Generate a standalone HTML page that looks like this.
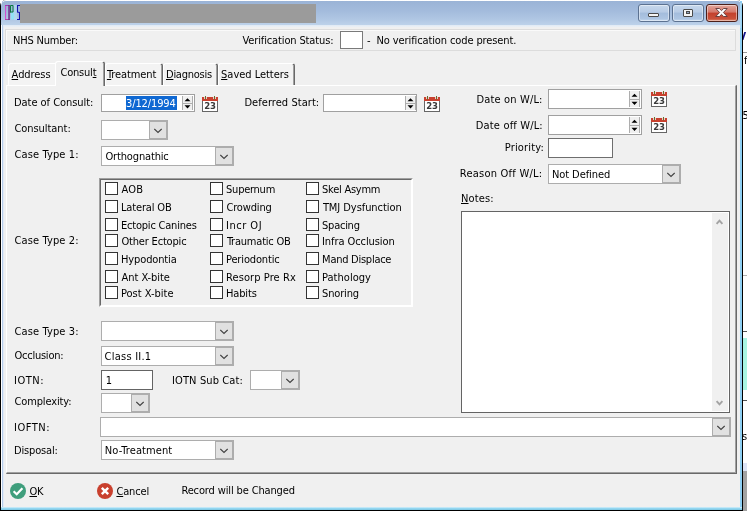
<!DOCTYPE html>
<html><head><meta charset="utf-8"><title>Consult</title>
<style>
html,body{margin:0;padding:0;background:#fff;}
#s{position:relative;width:747px;height:511px;overflow:hidden;background:transparent;will-change:transform;font-family:'DejaVu Sans Condensed','DejaVu Sans','Liberation Sans',sans-serif;font-stretch:condensed;font-size:11px;line-height:13px;}
#s div,#s svg,#s span{position:absolute;display:block;}
#s .t{white-space:nowrap;height:13px;}
#s .t u{position:static;display:inline;text-decoration:underline;text-underline-offset:1px;text-decoration-thickness:1px;}
#s .t b{position:static;display:inline;font-weight:normal;}
</style></head><body><div id="s">

<div style="left:743px;top:0px;width:4px;height:511px;background:#fff"></div>
<div style="left:743px;top:52px;width:4px;height:1px;background:#9a9a9a"></div>
<div style="left:743px;top:275px;width:4px;height:1px;background:#b0b0b0"></div>
<div style="left:743px;top:331px;width:4px;height:1px;background:#555"></div>
<div style="left:743px;top:338px;width:4px;height:52px;background:#a9f5e2"></div>
<div style="left:743px;top:400px;width:4px;height:1px;background:#555"></div>
<div style="left:743px;top:463px;width:4px;height:8px;background:#dde3f5"></div>
<div style="left:743px;top:471px;width:4px;height:40px;background:#a3a3a3"></div>
<span class="t" style="left:738.5px;top:30px;color:#14148c;font-size:11px;font-weight:bold">V</span>
<span class="t" style="left:744px;top:54px;color:#000">f</span>
<span class="t" style="left:742.5px;top:109px;color:#000">5</span>
<span class="t" style="left:742px;top:430px;color:#000">s</span>
<div style="left:0px;top:0px;width:743px;height:511px;background:#000;border-radius:6px 6px 0 0"></div>
<div style="left:1px;top:0px;width:741px;height:510px;background:linear-gradient(#fff,#dfeaf6 30px,#cfe6f6 200px,#9bd8f1);border-radius:5px 5px 0 0"></div>
<div style="left:1px;top:1px;width:2px;height:506px;background:linear-gradient(90deg,#fff 50%,#b4cbe9 50%)"></div>
<div style="left:740px;top:1px;width:2px;height:509px;background:#8ecff3"></div>
<div style="left:1px;top:507px;width:741px;height:3px;background:linear-gradient(#d9f0fa,#93d6f0 50%,#7cc6e2)"></div>
<div style="left:1px;top:1px;width:741px;height:24px;background:linear-gradient(#9ab3d6,#a3bbdc 40%,#afc6e3 75%,#bdd2ea);border-radius:5px 5px 0 0"></div>
<div style="left:3px;top:25px;width:737px;height:2px;background:linear-gradient(#dfe9f5,#ebf0f6)"></div>
<div style="left:740px;top:3px;width:2px;height:25px;background:linear-gradient(90deg,#b5dcf5,#8ecff3)"></div>
<div style="left:3px;top:27px;width:737px;height:480px;background:#f0f0f0"></div>
<div style="left:3px;top:25px;width:1px;height:482px;background:#e2eaf6"></div>
<svg style="left:4px;top:4px" width="17" height="17" viewBox="0 0 17 17">
<rect x="7" y="8.5" width="3" height="7" fill="#93e2f6"/><rect x="10" y="1" width="3" height="15" fill="#b5e0f4" opacity="0.7"/>
<rect x="1" y="1" width="1.1" height="15" fill="#d24fd0"/><rect x="1" y="1" width="4.6" height="1" fill="#a53ab0"/><rect x="1" y="15" width="4.6" height="1" fill="#b040a8"/>
<rect x="4.3" y="1" width="1.5" height="15" fill="#6e2a86"/>
<path d="M6.5 8.6 V1.5 H9 V8 H6.5" fill="none" stroke="#0b7a40" stroke-width="1"/>
<path d="M16 1.5 H13.5 V8 L15.5 8.5 V15.5 H13" fill="none" stroke="#1414b0" stroke-width="1.1"/>
</svg>
<div style="left:20px;top:4px;width:296px;height:19px;background:#9b9b9b"></div>
<div style="left:638px;top:4px;width:32px;height:18px;background:linear-gradient(#c7d8ec,#b7cbe5 45%,#a3bcdc 50%,#adc5e2 85%,#c4d8ee);border:1px solid #5c7291;border-radius:3px;box-sizing:border-box;box-shadow:inset 0 0 0 1px rgba(255,255,255,.45)"></div>
<div style="left:672px;top:4px;width:32px;height:18px;background:linear-gradient(#c7d8ec,#b7cbe5 45%,#a3bcdc 50%,#adc5e2 85%,#c4d8ee);border:1px solid #5c7291;border-radius:3px;box-sizing:border-box;box-shadow:inset 0 0 0 1px rgba(255,255,255,.45)"></div>
<div style="left:706px;top:4px;width:32px;height:18px;background:linear-gradient(#e3a79c,#d4776a 45%,#c3402c 50%,#c9503a 85%,#dd8466);border:1px solid #4b1f1a;border-radius:3px;box-sizing:border-box;box-shadow:inset 0 0 0 1px rgba(255,255,255,.45)"></div>
<div style="left:648px;top:13px;width:11px;height:4px;background:#f4f4f4;border:1px solid #4a4a4a;box-sizing:border-box;border-radius:1px"></div>
<div style="left:683px;top:9px;width:10px;height:8px;background:#f4f4f4;border:1px solid #4a4a4a;box-sizing:border-box;border-radius:1px"></div>
<div style="left:686px;top:11px;width:4px;height:3px;background:#8fa3c0;border:1px solid #4a4a4a;box-sizing:border-box"></div>
<svg style="left:715px;top:8px" width="13" height="9" viewBox="0 0 13 9"><path d="M0.8 0.5 L4.3 0.5 L6.5 2.6 L8.7 0.5 L12.2 0.5 L8.4 4.5 L12.2 8.5 L8.7 8.5 L6.5 6.4 L4.3 8.5 L0.8 8.5 L4.6 4.5 Z" fill="#fff" stroke="#5a3535" stroke-width="0.9"/></svg>
<div style="left:5px;top:29px;width:731px;height:22px;border:1px solid #dcdcdc;box-sizing:border-box;box-shadow:inset 1px 1px 0 #fafafa"></div>
<span class="t" id="nhs" style="left:13.00px;top:34px;letter-spacing:-0.203px;color:#000;">NHS Number:</span>
<span class="t" id="vs" style="left:242.59px;top:34px;letter-spacing:-0.136px;color:#000;">Verification Status:</span>
<div style="left:340px;top:31px;width:23px;height:18px;background:#fff;border:1px solid #7a7a7a;box-sizing:border-box"></div>
<span class="t" id="dash" style="left:366.99px;top:34px;letter-spacing:-0.200px;color:#000;">-</span>
<span class="t" id="nov" style="left:376.57px;top:34px;letter-spacing:-0.113px;color:#000;">No verification code present.</span>
<div style="left:6px;top:85px;width:731px;height:389px;background:#f0f0f0;border-left:1px solid #fff;border-top:1px solid #fff;border-right:2px solid #696969;border-bottom:2px solid #696969;box-sizing:border-box"></div>
<div style="left:735px;top:86px;width:1px;height:387px;background:#a0a0a0"></div>
<div style="left:7px;top:472px;width:729px;height:1px;background:#a0a0a0"></div>
<div style="left:8px;top:63px;width:48px;height:22px;background:#f3f3f3;border-left:1px solid #fff;border-top:1px solid #fff;border-radius:3px 0 0 0;box-sizing:border-box"></div>
<div style="left:105px;top:63px;width:58px;height:22px;background:#f3f3f3;border-left:1px solid #fff;border-top:1px solid #fff;border-right:2px solid #696969;border-radius:3px 3px 0 0;box-sizing:border-box"></div>
<div style="left:161px;top:65px;width:1px;height:20px;background:#a0a0a0"></div>
<div style="left:163px;top:63px;width:55px;height:22px;background:#f3f3f3;border-left:1px solid #fff;border-top:1px solid #fff;border-right:2px solid #696969;border-radius:3px 3px 0 0;box-sizing:border-box"></div>
<div style="left:216px;top:65px;width:1px;height:20px;background:#a0a0a0"></div>
<div style="left:218px;top:63px;width:77px;height:22px;background:#f3f3f3;border-left:1px solid #fff;border-top:1px solid #fff;border-right:2px solid #696969;border-radius:3px 3px 0 0;box-sizing:border-box"></div>
<div style="left:293px;top:65px;width:1px;height:20px;background:#a0a0a0"></div>
<div style="left:55px;top:61px;width:50px;height:25px;background:#f0f0f0;border-left:1px solid #fff;border-top:1px solid #fff;border-right:2px solid #696969;border-radius:3px 3px 0 0;box-sizing:border-box"></div>
<div style="left:103px;top:63px;width:1px;height:23px;background:#a0a0a0"></div>
<span class="t" id="t_addr" style="left:11.62px;top:68px;letter-spacing:-0.067px;color:#000;"><u>A</u>ddress</span>
<span class="t" id="t_cons" style="left:60.42px;top:66px;letter-spacing:-0.192px;color:#000;">Consul<u>t</u></span>
<span class="t" id="t_trea" style="left:106.88px;top:68px;letter-spacing:-0.075px;color:#000;"><u>T</u>reatment</span>
<span class="t" id="t_diag" style="left:166.00px;top:68px;letter-spacing:-0.260px;color:#000;"><u>D</u>iagnosis</span>
<span class="t" id="t_save" style="left:221.10px;top:68px;letter-spacing:-0.032px;color:#000;"><u>S</u>aved Letters</span>
<span class="t" id="l_doc" style="left:14.00px;top:96px;letter-spacing:-0.043px;color:#000;">Date of Consult:</span>
<div style="left:101px;top:94px;width:94px;height:18px;background:#fff;border:1px solid #a0a0a0;box-sizing:border-box"></div>
<div style="left:126px;top:96px;width:51px;height:14px;background:#0f68d2;overflow:hidden"></div>
<span class="t" id="v_date" style="left:126.03px;top:97px;letter-spacing:-0.116px;color:#fff;">3/12/1994</span>
<div style="left:101.5px;top:95px;width:24.5px;height:16px;background:#fff"></div>
<div style="left:182px;top:96px;width:11px;height:14px;background:#adadad"></div>
<div style="left:183px;top:96px;width:9px;height:7px;background:#f0f0f0"></div>
<div style="left:183px;top:104px;width:9px;height:6px;background:#f0f0f0"></div>
<svg style="left:182px;top:96px" width="11" height="14" viewBox="0 0 11 14"><path d="M5.5 2.20 L8.5 5.30 L2.5 5.30 Z M2.5 9.30 L8.5 9.30 L5.5 12.40 Z" fill="#000"/></svg>
<svg style="left:202px;top:96px" width="16" height="16" viewBox="0 0 16 16">
<rect x="0.5" y="4.5" width="15" height="11" fill="#fff" stroke="#666" stroke-width="1"/>
<rect x="0" y="1" width="16" height="4" fill="#c9402e"/>
<rect x="2.2" y="0" width="2.6" height="3" fill="#f0f0f0"/><rect x="11.2" y="0" width="2.6" height="3" fill="#f0f0f0"/>
<rect x="3" y="0" width="1" height="3.4" fill="#6b6b2a"/><rect x="12" y="0" width="1" height="3.4" fill="#6b6b2a"/>
<text x="8" y="13.2" text-anchor="middle" style="font-family:'DejaVu Sans Condensed','DejaVu Sans','Liberation Sans',sans-serif;font-weight:700;font-size:9.5px;letter-spacing:-0.3px" fill="#3a3a3a">23</text>
</svg>
<span class="t" id="l_def" style="left:244.41px;top:96px;letter-spacing:0.055px;color:#000;">Deferred Start:</span>
<div style="left:323px;top:94px;width:94px;height:18px;background:#fff;border:1px solid #a0a0a0;box-sizing:border-box"></div>
<div style="left:405px;top:96px;width:11px;height:14px;background:#adadad"></div>
<div style="left:406px;top:96px;width:9px;height:7px;background:#f0f0f0"></div>
<div style="left:406px;top:104px;width:9px;height:6px;background:#f0f0f0"></div>
<svg style="left:405px;top:96px" width="11" height="14" viewBox="0 0 11 14"><path d="M5.5 2.20 L8.5 5.30 L2.5 5.30 Z M2.5 9.30 L8.5 9.30 L5.5 12.40 Z" fill="#000"/></svg>
<svg style="left:424px;top:96px" width="16" height="16" viewBox="0 0 16 16">
<rect x="0.5" y="4.5" width="15" height="11" fill="#fff" stroke="#666" stroke-width="1"/>
<rect x="0" y="1" width="16" height="4" fill="#c9402e"/>
<rect x="2.2" y="0" width="2.6" height="3" fill="#f0f0f0"/><rect x="11.2" y="0" width="2.6" height="3" fill="#f0f0f0"/>
<rect x="3" y="0" width="1" height="3.4" fill="#6b6b2a"/><rect x="12" y="0" width="1" height="3.4" fill="#6b6b2a"/>
<text x="8" y="13.2" text-anchor="middle" style="font-family:'DejaVu Sans Condensed','DejaVu Sans','Liberation Sans',sans-serif;font-weight:700;font-size:9.5px;letter-spacing:-0.3px" fill="#3a3a3a">23</text>
</svg>
<span class="t" id="l_con" style="left:14.42px;top:122px;letter-spacing:-0.050px;color:#000;">Consultant:</span>
<div style="left:101px;top:120px;width:67px;height:20px;background:#fff;border:1px solid #adadad;box-sizing:border-box"></div>
<div style="left:149px;top:120px;width:19px;height:20px;background:#e1e1e1;border:1px solid #adadad;border-right-width:2px;border-bottom-width:2px;border-top-width:2px;box-sizing:border-box"></div>
<svg style="left:154px;top:128px" width="8" height="6" viewBox="0 0 8 6"><path d="M0.3 0.9 L4 4.5 L7.7 0.9" fill="none" stroke="#404040" stroke-width="1.15"/></svg>
<span class="t" id="l_ct1" style="left:14.42px;top:148px;letter-spacing:0.136px;color:#000;">Case Type 1:</span>
<div style="left:101px;top:146px;width:133px;height:20px;background:#fff;border:1px solid #adadad;box-sizing:border-box"></div>
<div style="left:215px;top:146px;width:19px;height:20px;background:#e1e1e1;border:1px solid #adadad;border-right-width:2px;border-bottom-width:2px;border-top-width:2px;box-sizing:border-box"></div>
<svg style="left:220px;top:154px" width="8" height="6" viewBox="0 0 8 6"><path d="M0.3 0.9 L4 4.5 L7.7 0.9" fill="none" stroke="#404040" stroke-width="1.15"/></svg>
<span class="t" id="v_orth" style="left:105.46px;top:150px;letter-spacing:-0.152px;color:#000;">Orthognathic</span>
<span class="t" id="l_ct2" style="left:14.42px;top:234px;letter-spacing:0.136px;color:#000;">Case Type 2:</span>
<div style="left:99px;top:178px;width:314px;height:129px;border-top:1px solid #a0a0a0;border-left:1px solid #a0a0a0;border-right:1px solid #fff;border-bottom:1px solid #fff;box-sizing:border-box"></div>
<div style="left:100px;top:179px;width:312px;height:127px;border-top:1px solid #696969;border-left:1px solid #696969;border-right:1px solid #fff;border-bottom:1px solid #fff;box-sizing:border-box"></div>
<div style="left:105px;top:182px;width:13px;height:13px;background:#fff;border:1px solid #333;box-sizing:border-box"></div>
<span class="t" id="c00" style="left:121.62px;top:183px;letter-spacing:0.090px;color:#000;">AOB</span>
<div style="left:105px;top:200px;width:13px;height:13px;background:#fff;border:1px solid #333;box-sizing:border-box"></div>
<span class="t" id="c01" style="left:121.00px;top:201px;letter-spacing:-0.156px;color:#000;">Lateral OB</span>
<div style="left:105px;top:218px;width:13px;height:13px;background:#fff;border:1px solid #333;box-sizing:border-box"></div>
<span class="t" id="c02" style="left:121.00px;top:219px;letter-spacing:-0.210px;color:#000;">Ectopic Canines</span>
<div style="left:105px;top:234px;width:13px;height:13px;background:#fff;border:1px solid #333;box-sizing:border-box"></div>
<span class="t" id="c03" style="left:121.46px;top:235px;letter-spacing:-0.183px;color:#000;">Other Ectopic</span>
<div style="left:105px;top:252px;width:13px;height:13px;background:#fff;border:1px solid #333;box-sizing:border-box"></div>
<span class="t" id="c04" style="left:121.00px;top:253px;letter-spacing:-0.127px;color:#000;">Hypodontia</span>
<div style="left:105px;top:270px;width:13px;height:13px;background:#fff;border:1px solid #333;box-sizing:border-box"></div>
<span class="t" id="c05" style="left:121.62px;top:271px;letter-spacing:-0.061px;color:#000;">Ant X-bite</span>
<div style="left:105px;top:286px;width:13px;height:13px;background:#fff;border:1px solid #333;box-sizing:border-box"></div>
<span class="t" id="c06" style="left:121.00px;top:287px;letter-spacing:-0.008px;color:#000;">Post X-bite</span>
<div style="left:210px;top:182px;width:13px;height:13px;background:#fff;border:1px solid #333;box-sizing:border-box"></div>
<span class="t" id="c10" style="left:226.10px;top:183px;letter-spacing:-0.260px;color:#000;">Supernum</span>
<div style="left:210px;top:200px;width:13px;height:13px;background:#fff;border:1px solid #333;box-sizing:border-box"></div>
<span class="t" id="c11" style="left:226.42px;top:201px;letter-spacing:-0.145px;color:#000;">Crowding</span>
<div style="left:210px;top:218px;width:13px;height:13px;background:#fff;border:1px solid #333;box-sizing:border-box"></div>
<span class="t" id="c12" style="left:226.00px;top:219px;letter-spacing:0.500px;color:#000;">Incr OJ</span>
<div style="left:210px;top:234px;width:13px;height:13px;background:#fff;border:1px solid #333;box-sizing:border-box"></div>
<span class="t" id="c13" style="left:226.88px;top:235px;letter-spacing:-0.214px;color:#000;">Traumatic OB</span>
<div style="left:210px;top:252px;width:13px;height:13px;background:#fff;border:1px solid #333;box-sizing:border-box"></div>
<span class="t" id="c14" style="left:226.00px;top:253px;letter-spacing:-0.148px;color:#000;">Periodontic</span>
<div style="left:210px;top:270px;width:13px;height:13px;background:#fff;border:1px solid #333;box-sizing:border-box"></div>
<span class="t" id="c15" style="left:226.00px;top:271px;letter-spacing:0.091px;color:#000;">Resorp Pre Rx</span>
<div style="left:210px;top:286px;width:13px;height:13px;background:#fff;border:1px solid #333;box-sizing:border-box"></div>
<span class="t" id="c16" style="left:226.00px;top:287px;letter-spacing:-0.140px;color:#000;">Habits</span>
<div style="left:306px;top:182px;width:13px;height:13px;background:#fff;border:1px solid #333;box-sizing:border-box"></div>
<span class="t" id="c20" style="left:322.10px;top:183px;letter-spacing:-0.260px;color:#000;">Skel Asymm</span>
<div style="left:306px;top:200px;width:13px;height:13px;background:#fff;border:1px solid #333;box-sizing:border-box"></div>
<span class="t" id="c21" style="left:322.88px;top:201px;letter-spacing:-0.060px;color:#000;">TMJ Dysfunction</span>
<div style="left:306px;top:218px;width:13px;height:13px;background:#fff;border:1px solid #333;box-sizing:border-box"></div>
<span class="t" id="c22" style="left:322.10px;top:219px;letter-spacing:-0.260px;color:#000;">Spacing</span>
<div style="left:306px;top:234px;width:13px;height:13px;background:#fff;border:1px solid #333;box-sizing:border-box"></div>
<span class="t" id="c23" style="left:322.00px;top:235px;letter-spacing:-0.077px;color:#000;">Infra Occlusion</span>
<div style="left:306px;top:252px;width:13px;height:13px;background:#fff;border:1px solid #333;box-sizing:border-box"></div>
<span class="t" id="c24" style="left:322.12px;top:253px;letter-spacing:-0.260px;color:#000;">Mand Displace</span>
<div style="left:306px;top:270px;width:13px;height:13px;background:#fff;border:1px solid #333;box-sizing:border-box"></div>
<span class="t" id="c25" style="left:322.00px;top:271px;letter-spacing:0.029px;color:#000;">Pathology</span>
<div style="left:306px;top:286px;width:13px;height:13px;background:#fff;border:1px solid #333;box-sizing:border-box"></div>
<span class="t" id="c26" style="left:322.10px;top:287px;letter-spacing:-0.175px;color:#000;">Snoring</span>
<span class="t" id="l_ct3" style="left:14.42px;top:325px;letter-spacing:0.136px;color:#000;">Case Type 3:</span>
<div style="left:101px;top:321px;width:133px;height:20px;background:#fff;border:1px solid #adadad;box-sizing:border-box"></div>
<div style="left:215px;top:321px;width:19px;height:20px;background:#e1e1e1;border:1px solid #adadad;border-right-width:2px;border-bottom-width:2px;border-top-width:2px;box-sizing:border-box"></div>
<svg style="left:220px;top:329px" width="8" height="6" viewBox="0 0 8 6"><path d="M0.3 0.9 L4 4.5 L7.7 0.9" fill="none" stroke="#404040" stroke-width="1.15"/></svg>
<span class="t" id="l_occ" style="left:14.46px;top:349px;letter-spacing:-0.238px;color:#000;">Occlusion:</span>
<div style="left:101px;top:346px;width:133px;height:20px;background:#fff;border:1px solid #adadad;box-sizing:border-box"></div>
<div style="left:215px;top:346px;width:19px;height:20px;background:#e1e1e1;border:1px solid #adadad;border-right-width:2px;border-bottom-width:2px;border-top-width:2px;box-sizing:border-box"></div>
<svg style="left:220px;top:354px" width="8" height="6" viewBox="0 0 8 6"><path d="M0.3 0.9 L4 4.5 L7.7 0.9" fill="none" stroke="#404040" stroke-width="1.15"/></svg>
<span class="t" id="v_occ" style="left:104.57px;top:350px;letter-spacing:0.233px;color:#000;">Class II.1</span>
<span class="t" id="l_iotn" style="left:14.00px;top:374px;letter-spacing:0.500px;color:#000;">IOTN:</span>
<div style="left:101px;top:370px;width:52px;height:20px;background:#fff;border:1px solid #646464;box-sizing:border-box"></div>
<span class="t" id="v_one" style="left:105.71px;top:374px;letter-spacing:-0.200px;color:#000;">1</span>
<span class="t" id="l_sub" style="left:172.00px;top:374px;letter-spacing:0.117px;color:#000;">IOTN Sub Cat:</span>
<div style="left:250px;top:370px;width:50px;height:20px;background:#fff;border:1px solid #adadad;box-sizing:border-box"></div>
<div style="left:281px;top:370px;width:19px;height:20px;background:#e1e1e1;border:1px solid #adadad;border-right-width:2px;border-bottom-width:2px;border-top-width:2px;box-sizing:border-box"></div>
<svg style="left:286px;top:378px" width="8" height="6" viewBox="0 0 8 6"><path d="M0.3 0.9 L4 4.5 L7.7 0.9" fill="none" stroke="#404040" stroke-width="1.15"/></svg>
<span class="t" id="l_cpx" style="left:14.42px;top:395px;letter-spacing:-0.122px;color:#000;">Complexity:</span>
<div style="left:101px;top:393px;width:49px;height:20px;background:#fff;border:1px solid #adadad;box-sizing:border-box"></div>
<div style="left:131px;top:393px;width:19px;height:20px;background:#e1e1e1;border:1px solid #adadad;border-right-width:2px;border-bottom-width:2px;border-top-width:2px;box-sizing:border-box"></div>
<svg style="left:136px;top:401px" width="8" height="6" viewBox="0 0 8 6"><path d="M0.3 0.9 L4 4.5 L7.7 0.9" fill="none" stroke="#404040" stroke-width="1.15"/></svg>
<span class="t" id="l_ioftn" style="left:14.00px;top:421px;letter-spacing:0.500px;color:#000;">IOFTN:</span>
<div style="left:100px;top:417px;width:631px;height:20px;background:#fff;border:1px solid #adadad;box-sizing:border-box"></div>
<div style="left:712px;top:417px;width:19px;height:20px;background:#e1e1e1;border:1px solid #adadad;border-right-width:2px;border-bottom-width:2px;border-top-width:2px;box-sizing:border-box"></div>
<svg style="left:717px;top:425px" width="8" height="6" viewBox="0 0 8 6"><path d="M0.3 0.9 L4 4.5 L7.7 0.9" fill="none" stroke="#404040" stroke-width="1.15"/></svg>
<span class="t" id="l_disp" style="left:14.00px;top:444px;letter-spacing:-0.158px;color:#000;">Disposal:</span>
<div style="left:101px;top:440px;width:133px;height:20px;background:#fff;border:1px solid #adadad;box-sizing:border-box"></div>
<div style="left:215px;top:440px;width:19px;height:20px;background:#e1e1e1;border:1px solid #adadad;border-right-width:2px;border-bottom-width:2px;border-top-width:2px;box-sizing:border-box"></div>
<svg style="left:220px;top:448px" width="8" height="6" viewBox="0 0 8 6"><path d="M0.3 0.9 L4 4.5 L7.7 0.9" fill="none" stroke="#404040" stroke-width="1.15"/></svg>
<span class="t" id="v_disp" style="left:104.81px;top:444px;letter-spacing:0.096px;color:#000;">No-Treatment</span>
<span class="t" id="l_don" style="left:476.62px;top:93px;letter-spacing:0.143px;color:#000;">Date on W/L:</span>
<div style="left:548px;top:89px;width:94px;height:20px;background:#fff;border:1px solid #a0a0a0;box-sizing:border-box"></div>
<div style="left:629px;top:91px;width:11px;height:16px;background:#adadad"></div>
<div style="left:630px;top:91px;width:9px;height:8px;background:#f0f0f0"></div>
<div style="left:630px;top:100px;width:9px;height:7px;background:#f0f0f0"></div>
<svg style="left:629px;top:91px" width="11" height="16" viewBox="0 0 11 16"><path d="M5.5 2.70 L8.5 5.80 L2.5 5.80 Z M2.5 10.80 L8.5 10.80 L5.5 13.90 Z" fill="#000"/></svg>
<svg style="left:651px;top:91px" width="16" height="16" viewBox="0 0 16 16">
<rect x="0.5" y="4.5" width="15" height="11" fill="#fff" stroke="#666" stroke-width="1"/>
<rect x="0" y="1" width="16" height="4" fill="#c9402e"/>
<rect x="2.2" y="0" width="2.6" height="3" fill="#f0f0f0"/><rect x="11.2" y="0" width="2.6" height="3" fill="#f0f0f0"/>
<rect x="3" y="0" width="1" height="3.4" fill="#6b6b2a"/><rect x="12" y="0" width="1" height="3.4" fill="#6b6b2a"/>
<text x="8" y="13.2" text-anchor="middle" style="font-family:'DejaVu Sans Condensed','DejaVu Sans','Liberation Sans',sans-serif;font-weight:700;font-size:9.5px;letter-spacing:-0.3px" fill="#3a3a3a">23</text>
</svg>
<span class="t" id="l_doff" style="left:475.81px;top:119px;letter-spacing:0.164px;color:#000;">Date off W/L:</span>
<div style="left:548px;top:115px;width:94px;height:20px;background:#fff;border:1px solid #a0a0a0;box-sizing:border-box"></div>
<div style="left:629px;top:117px;width:11px;height:16px;background:#adadad"></div>
<div style="left:630px;top:117px;width:9px;height:8px;background:#f0f0f0"></div>
<div style="left:630px;top:126px;width:9px;height:7px;background:#f0f0f0"></div>
<svg style="left:629px;top:117px" width="11" height="16" viewBox="0 0 11 16"><path d="M5.5 2.70 L8.5 5.80 L2.5 5.80 Z M2.5 10.80 L8.5 10.80 L5.5 13.90 Z" fill="#000"/></svg>
<svg style="left:651px;top:117px" width="16" height="16" viewBox="0 0 16 16">
<rect x="0.5" y="4.5" width="15" height="11" fill="#fff" stroke="#666" stroke-width="1"/>
<rect x="0" y="1" width="16" height="4" fill="#c9402e"/>
<rect x="2.2" y="0" width="2.6" height="3" fill="#f0f0f0"/><rect x="11.2" y="0" width="2.6" height="3" fill="#f0f0f0"/>
<rect x="3" y="0" width="1" height="3.4" fill="#6b6b2a"/><rect x="12" y="0" width="1" height="3.4" fill="#6b6b2a"/>
<text x="8" y="13.2" text-anchor="middle" style="font-family:'DejaVu Sans Condensed','DejaVu Sans','Liberation Sans',sans-serif;font-weight:700;font-size:9.5px;letter-spacing:-0.3px" fill="#3a3a3a">23</text>
</svg>
<span class="t" id="l_pri" style="left:504.81px;top:141px;letter-spacing:0.151px;color:#000;">Priority:</span>
<div style="left:548px;top:138px;width:65px;height:20px;background:#fff;border:1px solid #6e6e6e;box-sizing:border-box"></div>
<span class="t" id="l_rea" style="left:459.81px;top:167px;letter-spacing:0.234px;color:#000;">Reason Off W/L:</span>
<div style="left:548px;top:164px;width:133px;height:20px;background:#fff;border:1px solid #adadad;box-sizing:border-box"></div>
<div style="left:662px;top:164px;width:19px;height:20px;background:#e1e1e1;border:1px solid #adadad;border-right-width:2px;border-bottom-width:2px;border-top-width:2px;box-sizing:border-box"></div>
<svg style="left:667px;top:172px" width="8" height="6" viewBox="0 0 8 6"><path d="M0.3 0.9 L4 4.5 L7.7 0.9" fill="none" stroke="#404040" stroke-width="1.15"/></svg>
<span class="t" id="v_nd" style="left:552.00px;top:168px;letter-spacing:-0.089px;color:#000;">Not Defined</span>
<span class="t" id="l_notes" style="left:461.00px;top:192px;letter-spacing:0.136px;color:#000;"><u>N</u>otes:</span>
<div style="left:461px;top:211px;width:269px;height:202px;background:#fff;border:1px solid #646464;box-sizing:border-box"></div>
<div style="left:712px;top:213px;width:16px;height:198px;background:#f0f0f0"></div>
<svg style="left:715px;top:218px" width="9" height="8" viewBox="0 0 9 8"><path d="M1.6 5.8 L4.5 2.6 L7.4 5.8" fill="none" stroke="#a3a3a3" stroke-width="1.9"/></svg>
<svg style="left:715px;top:399px" width="9" height="8" viewBox="0 0 9 8"><path d="M1.6 2.2 L4.5 5.4 L7.4 2.2" fill="none" stroke="#a3a3a3" stroke-width="1.9"/></svg>
<svg style="left:10px;top:483px" width="16" height="16" viewBox="0 0 16 16"><circle cx="8" cy="8" r="8" fill="#3f9e7c"/><path d="M3.6 8.3 L6.7 11.2 L12.4 5.2" fill="none" stroke="#fff" stroke-width="2.2"/></svg>
<span class="t" id="b_ok" style="left:29.46px;top:485px;letter-spacing:-0.260px;color:#000;"><u>O</u>K</span>
<svg style="left:97px;top:483px" width="16" height="16" viewBox="0 0 16 16"><circle cx="8" cy="8" r="8" fill="#c9402e"/><path d="M4.8 4.8 L11.2 11.2 M11.2 4.8 L4.8 11.2" fill="none" stroke="#fff" stroke-width="2.4"/></svg>
<span class="t" id="b_cancel" style="left:116.42px;top:485px;letter-spacing:-0.142px;color:#000;"><u>C</u>ancel</span>
<span class="t" id="b_rec" style="left:181.41px;top:484px;letter-spacing:-0.136px;color:#000;">Record will be Changed</span>
</div></body></html>
